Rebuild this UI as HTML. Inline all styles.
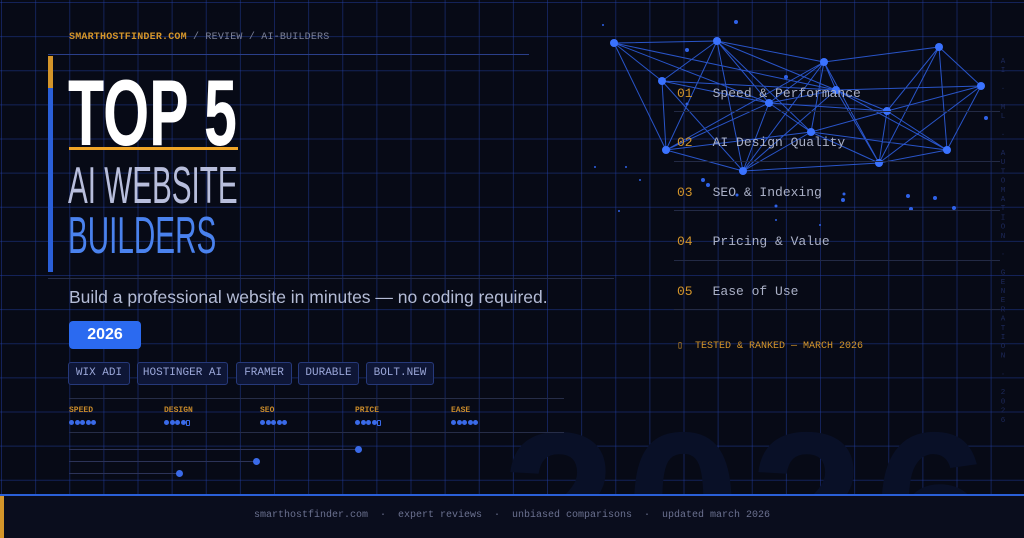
<!DOCTYPE html>
<html><head><meta charset="utf-8"><style>
*{margin:0;padding:0;box-sizing:border-box}
html,body{width:1024px;height:538px;overflow:hidden}
body{background:#070a16;position:relative;font-family:"Liberation Sans",sans-serif}
.grid{position:absolute;left:0;top:0;width:1024px;height:494px;
background-image:linear-gradient(to right,rgba(35,65,170,.45) 1px,transparent 1px),linear-gradient(to bottom,rgba(35,65,170,.45) 1px,transparent 1px);
background-size:34.133px 34.133px;background-position:1px 2px}
.abs{position:absolute}
.mono{font-family:"Liberation Mono",monospace}
.big26{position:absolute;left:500px;top:380px;width:524px;height:114px;overflow:hidden}
.big26 span{position:absolute;left:2px;top:22px;font:bold 205px/1 "Liberation Sans",sans-serif;color:#091027;letter-spacing:10px}
.tag{position:absolute;top:362px;height:23px;border:1px solid #26397a;background:#0e1636;border-radius:3px;color:#9aa6d8;font:11px/21px "Liberation Mono",monospace;text-align:center}
.lbl{position:absolute;top:406px;font:bold 8px "Liberation Mono",monospace;color:#c88a2a}
.dots{position:absolute;top:420px;height:5px;display:flex;gap:0.5px}
.dots i{display:block;width:5px;height:5px;border-radius:50%;background:#3a6ae8}
.dots i.e{background:none;border:1px solid #3a6ae8;border-radius:1px;width:4px;height:6px;margin-top:-0.5px}
.item{position:absolute;left:677px;font:13px "Liberation Mono",monospace;color:#aab0c6}
.item b{font-weight:normal;color:#d4952a;margin-right:20px}
.sep{position:absolute;left:674px;width:326px;height:1px;background:#232a45}
.hd{position:absolute;left:68px;line-height:1;transform-origin:left top;white-space:nowrap}
</style></head><body>
<div class="grid"></div>
<div class="big26"><span>2026</span></div>

<div class="abs mono" style="left:69px;top:32px;font-size:10px;color:#7d8299;letter-spacing:.2px"><span style="color:#d4952a;font-weight:bold">SMARTHOSTFINDER.COM</span> / REVIEW / AI-BUILDERS</div>
<div class="abs" style="left:48px;top:54px;width:481px;height:1px;background:#2a3f8a"></div>
<div class="abs" style="left:48px;top:56px;width:5px;height:32px;background:#d4952a"></div>
<div class="abs" style="left:48px;top:88px;width:5px;height:184px;background:#2a5fd8"></div>
<div class="hd" style="top:66px;font-size:94px;font-weight:bold;color:#fff;transform:scaleX(.63)">TOP 5</div>
<div class="abs" style="left:69px;top:147px;width:169px;height:3px;background:#f0a526"></div>
<div class="hd" style="top:160px;font-size:52px;color:#b8bedc;transform:scaleX(.57)">AI WEBSITE</div>
<div class="hd" style="top:210px;font-size:52px;color:#4a82ee;transform:scaleX(.57)">BUILDERS</div>
<div class="abs" style="left:48px;top:278px;width:566px;height:1px;background:#262d48"></div>
<div class="abs" style="left:69px;top:287px;font-size:17.5px;color:#b4bcd6">Build a professional website in minutes — no coding required.</div>
<div class="abs" style="left:69px;top:321px;width:72px;height:28px;background:#2b6af0;border-radius:4px;color:#fff;font:bold 16px/28px 'Liberation Sans',sans-serif;text-align:center">2026</div>

<div class="tag" style="left:68px;width:62px">WIX ADI</div>
<div class="tag" style="left:137px;width:91px">HOSTINGER AI</div>
<div class="tag" style="left:236px;width:56px">FRAMER</div>
<div class="tag" style="left:298px;width:61px">DURABLE</div>
<div class="tag" style="left:366px;width:68px">BOLT.NEW</div>

<div class="abs" style="left:69px;top:398px;width:495px;height:1px;background:#262d48"></div>
<div class="lbl" style="left:69px">SPEED</div><div class="lbl" style="left:164px">DESIGN</div><div class="lbl" style="left:260px">SEO</div><div class="lbl" style="left:355px">PRICE</div><div class="lbl" style="left:451px">EASE</div>
<div class="dots" style="left:69px"><i></i><i></i><i></i><i></i><i></i></div>
<div class="dots" style="left:164px"><i></i><i></i><i></i><i></i><i class="e"></i></div>
<div class="dots" style="left:260px"><i></i><i></i><i></i><i></i><i></i></div>
<div class="dots" style="left:355px"><i></i><i></i><i></i><i></i><i class="e"></i></div>
<div class="dots" style="left:451px"><i></i><i></i><i></i><i></i><i></i></div>
<div class="abs" style="left:69px;top:432px;width:495px;height:1px;background:#262d48"></div>
<div class="abs" style="left:69px;top:449px;width:290px;height:1px;background:#2c3358"></div>
<div class="abs" style="left:355px;top:446px;width:7px;height:7px;border-radius:50%;background:#3a6ae8"></div>
<div class="abs" style="left:69px;top:461px;width:187px;height:1px;background:#2c3358"></div>
<div class="abs" style="left:253px;top:458px;width:7px;height:7px;border-radius:50%;background:#3a6ae8"></div>
<div class="abs" style="left:69px;top:473px;width:110px;height:1px;background:#2c3358"></div>
<div class="abs" style="left:176px;top:470px;width:7px;height:7px;border-radius:50%;background:#3a6ae8"></div>

<svg class="abs" style="left:0;top:0" width="1024" height="494">
<g stroke="#2f62e8" stroke-width="1" opacity=".85">
<path d="M614 43L717 41M614 43L662 81M614 43L666 150M614 43L836 90M614 43L769 103M717 41L662 81M717 41L666 150M717 41L743 171M717 41L769 103M717 41L811 132M717 41L824 62M717 41L887 111M662 81L666 150M662 81L769 103M662 81L743 171M662 81L836 90M666 150L743 171M666 150L769 103M666 150L811 132M666 150L824 62M743 171L769 103M743 171L811 132M743 171L824 62M743 171L836 90M743 171L879 163M769 103L811 132M769 103L824 62M769 103L887 111M769 103L836 90M811 132L824 62M811 132L887 111M811 132L879 163M811 132L947 150M824 62L836 90M824 62L939 47M824 62L879 163M836 90L887 111M836 90L879 163M836 90L981 86M836 90L947 150M887 111L879 163M887 111L939 47M887 111L981 86M887 111L947 150M879 163L939 47M879 163L981 86M879 163L947 150M939 47L981 86M939 47L947 150M981 86L947 150"/>
</g>
<g fill="#3a72ff">
<circle cx="614" cy="43" r="4"/><circle cx="717" cy="41" r="4"/><circle cx="662" cy="81" r="4"/><circle cx="666" cy="150" r="4"/><circle cx="743" cy="171" r="4"/><circle cx="769" cy="103" r="4"/><circle cx="811" cy="132" r="4"/><circle cx="824" cy="62" r="4"/><circle cx="836" cy="90" r="4"/><circle cx="887" cy="111" r="4"/><circle cx="879" cy="163" r="4"/><circle cx="939" cy="47" r="4"/><circle cx="981" cy="86" r="4"/><circle cx="947" cy="150" r="4"/>
</g>
<g fill="#2f62e8">
<circle cx="736" cy="22" r="2"/><circle cx="687" cy="50" r="2"/><circle cx="786" cy="77" r="2"/><circle cx="687" cy="104" r="1.5"/><circle cx="703" cy="180" r="2"/><circle cx="708" cy="185" r="2"/><circle cx="737" cy="195" r="1.5"/><circle cx="843" cy="200" r="2"/><circle cx="908" cy="196" r="2"/><circle cx="935" cy="198" r="2"/><circle cx="954" cy="208" r="2"/><circle cx="911" cy="209" r="2"/><circle cx="986" cy="118" r="2"/><circle cx="844" cy="194" r="1.5"/><circle cx="776" cy="206" r="1.5"/><circle cx="626" cy="167" r="1"/><circle cx="595" cy="167" r="1"/><circle cx="640" cy="180" r="1"/><circle cx="619" cy="211" r="1"/><circle cx="603" cy="25" r="1"/><circle cx="776" cy="220" r="1"/><circle cx="820" cy="225" r="1"/>
</g>
</svg>

<div class="item" style="top:86px"><b>01</b>Speed &amp; Performance</div>
<div class="sep" style="top:111px"></div>
<div class="item" style="top:135px"><b>02</b>AI Design Quality</div>
<div class="sep" style="top:161px"></div>
<div class="item" style="top:185px"><b>03</b>SEO &amp; Indexing</div>
<div class="sep" style="top:210px"></div>
<div class="item" style="top:234px"><b>04</b>Pricing &amp; Value</div>
<div class="sep" style="top:260px"></div>
<div class="item" style="top:284px"><b>05</b>Ease of Use</div>
<div class="sep" style="top:309px"></div>
<div class="abs mono" style="left:677px;top:340px;font-size:10px;color:#d4952a">▯&nbsp;&nbsp;TESTED &amp; RANKED — MARCH 2026</div>

<div class="abs mono" style="left:999px;top:58px;font-size:7.5px;color:#1e2a5c;writing-mode:vertical-lr;text-orientation:upright;letter-spacing:1.2px">AI · ML · AUTOMATION · GENERATION · 2026</div>

<div class="abs" style="left:0;top:494px;width:1024px;height:44px;background:#0a0d1d;border-top:2px solid #2a5fd8"></div>
<div class="abs" style="left:0;top:496px;width:4px;height:42px;background:#d4952a"></div>
<div class="abs mono" style="left:0;top:510px;width:1024px;text-align:center;font-size:10px;color:#6b7190;white-space:pre">smarthostfinder.com  ·  expert reviews  ·  unbiased comparisons  ·  updated march 2026</div>
</body></html>
